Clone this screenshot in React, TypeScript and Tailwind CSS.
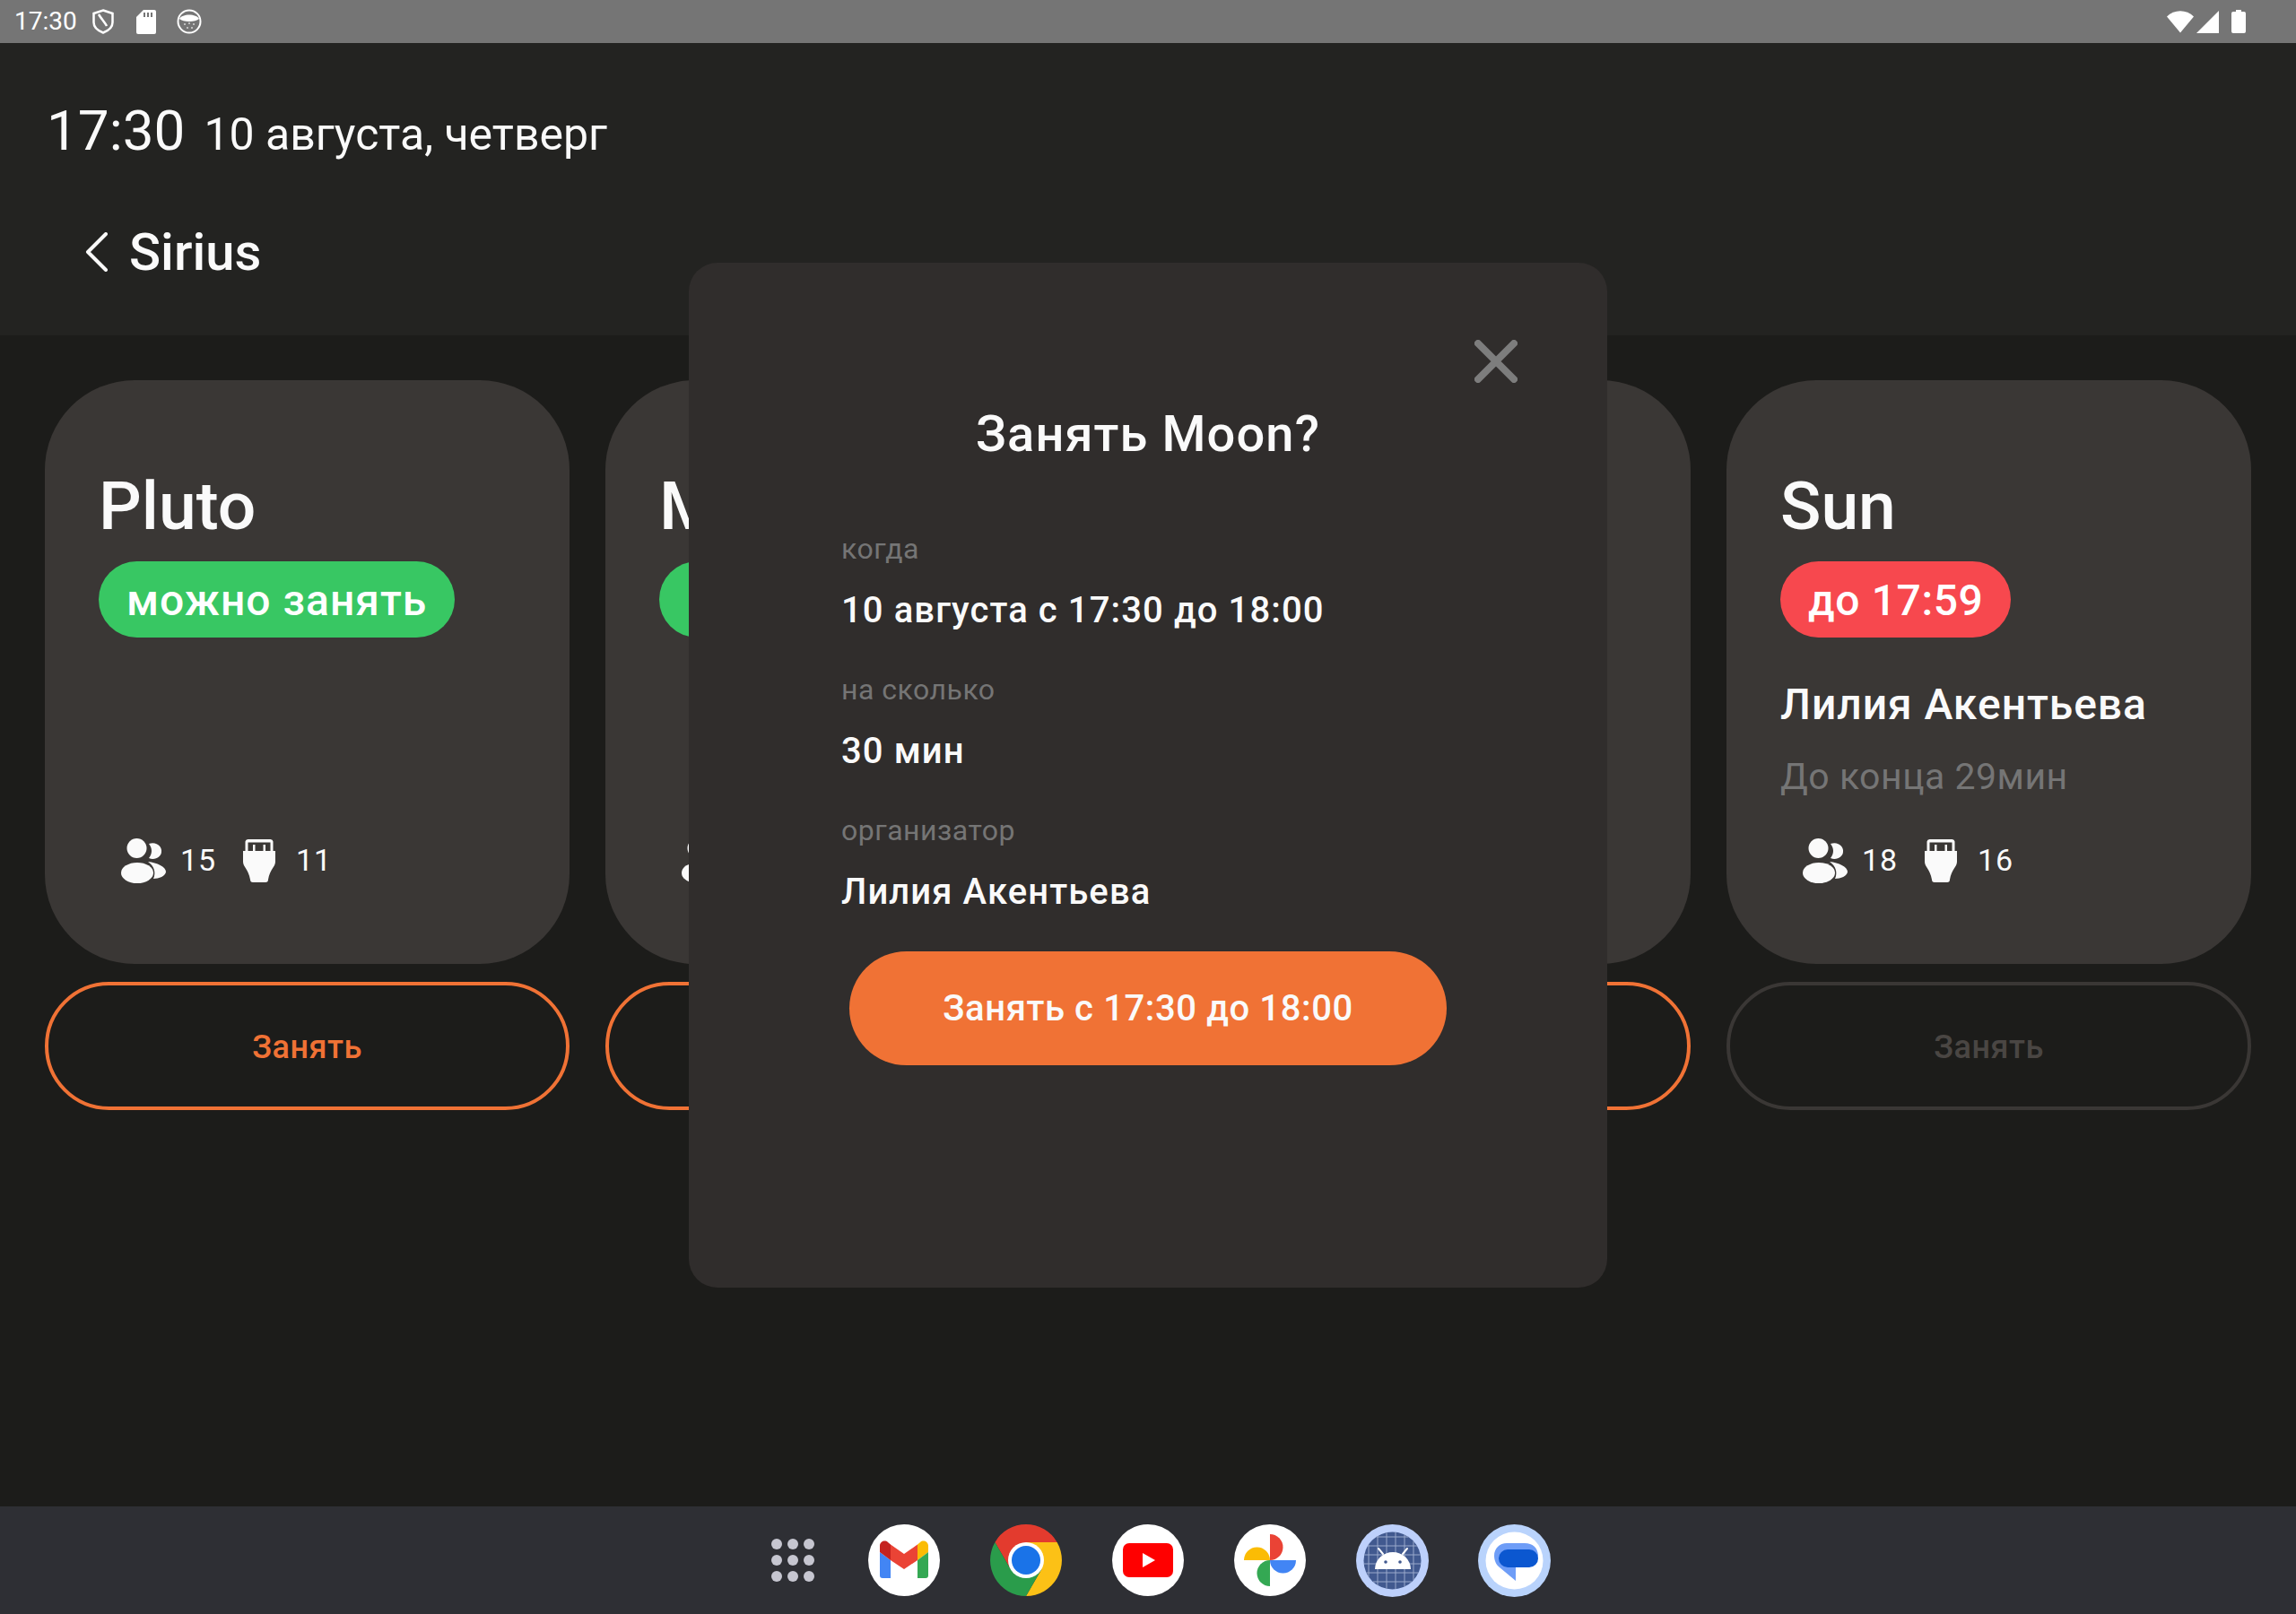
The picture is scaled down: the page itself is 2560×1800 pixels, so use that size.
const rooms = [
  { name: 'Pluto', people: 15, ports: 11, free: true },
  { name: 'Moon', people: 12, ports: 8, free: true },
  { name: 'Mars', people: 10, ports: 6, free: true },
  { name: 'Sun', people: 18, ports: 16, free: false },
]

function PeopleIcon() {
  return (
    <svg width="50" height="50" viewBox="0 0 50 50" className="shrink-0">
      <circle cx="17.500" cy="11" r="11" fill="#fafafa" />
      <ellipse cx="18" cy="38.500" rx="18" ry="11.500" fill="#fafafa" />
      <path d="M31 6C40 3 46 10 45 15C45 20 38 25 31 22C35 17 35 11 31 6z" fill="#fafafa" />
      <path d="M30 26C40 27 50 32 50 37C50 42 42 45 36 45C39 38 37 31 30 26z" fill="#fafafa" />
    </svg>
  )
}

function PortIcon() {
  return (
    <svg width="36" height="50" viewBox="0 0 36 50" className="shrink-0">
      <path d="M2.500 14V3.500A3 3 0 0 1 5.500 1h25a3 3 0 0 1 3 2.500V14h-3V4.500H5.500V14z" fill="#fafafa" />
      <path d="M11 7h2.500v7H11zM22.500 7H25v7h-2.500z" fill="#fafafa" />
      <path d="M0 14H36V26C36 32 30 34 28 46Q28 49 25 49H11Q8 49 8 46C6 34 0 32 0 26z" fill="#fafafa" />
    </svg>
  )
}

function RoomCard({ room }: { room: (typeof rooms)[number] }) {
  return (
    <div className="flex flex-col gap-[20px]">
      <div className="flex h-[651px] flex-col rounded-[100px] bg-[#3a3735] pl-[60px] pt-[98px]">
        <div className="text-[75px] font-medium leading-[84px] text-[#fafafa]">{room.name}</div>
        {room.free ? (
          <div className="mt-[20px] flex h-[85px] w-fit items-center rounded-full bg-[#38c763] px-[31px] pt-[2px] text-[48px] font-medium tracking-[1px] text-white">
            можно занять
          </div>
        ) : (
          <>
            <div className="mt-[20px] flex h-[85px] w-fit items-center rounded-full bg-[#f7484e] px-[31px] pt-[2px] text-[48px] font-medium tracking-[0.6px] text-white">
              до 17:59
            </div>
            <div className="mt-[47px] text-[48px] font-medium leading-[56px] tracking-[0.95px] text-[#fafafa]">Лилия Акентьева</div>
            <div className="mt-[27px] text-[41px] leading-[50px] tracking-[0.5px] text-[#757575]">До конца 29мин</div>
          </>
        )}
        <div className="mb-[90px] ml-[25px] mt-auto flex items-center text-[34px] tracking-[1px] text-[#fafafa]">
          <PeopleIcon />
          <span className="ml-[16px] w-[70px]">{room.people}</span>
          <PortIcon />
          <span className="ml-[23px]">{room.ports}</span>
        </div>
      </div>
      <button
        type="button"
        className={
          room.free
            ? 'h-[143px] rounded-full border-[4px] border-[#f07235] pt-[2px] text-[36px] font-medium tracking-[0.5px] text-[#f07235]'
            : 'h-[143px] rounded-full border-[4px] border-[#3a3735] pt-[2px] text-[36px] font-medium tracking-[0.5px] text-[#4a4643]'
        }
      >
        Занять
      </button>
    </div>
  )
}

function Field({ label, value }: { label: string; value: string }) {
  return (
    <div>
      <div className="text-[32px] leading-[40px] tracking-[0.5px] text-[#757575]">{label}</div>
      <div className="mt-[24px] text-[40px] font-medium leading-[50px] tracking-[1.1px] text-[#fafafa]">{value}</div>
    </div>
  )
}

function Gmail() {
  return (
    <svg width="80" height="80" viewBox="0 0 80 80">
      <circle cx="40" cy="40" r="40" fill="#fff" />
      <path d="M13 31l12 9v20h-9q-3 0-3-3z" fill="#4285f4" />
      <path d="M13 31v-7c0-5 6-7 9-4l3 2.500V40z" fill="#c5221f" />
      <path d="M25 22.500L40 33l15-10.500V40L40 50L25 40z" fill="#ea4335" />
      <path d="M55 22.500l3-2.500c3-3 9-1 9 4v7L55 40z" fill="#fbbc04" />
      <path d="M55 40l12-9v26q0 3-3 3h-9z" fill="#34a853" />
    </svg>
  )
}

function Chrome() {
  return (
    <svg width="80" height="80" viewBox="0 0 80 80">
      <path d="M40 0A40 40 0 0 0 5.400 20L22.700 50L40 20H74.600A40 40 0 0 0 40 0z" fill="#e33b2e" />
      <path d="M74.600 20H40L57.300 50L40 80A40 40 0 0 0 74.600 20z" fill="#fcc116" />
      <path d="M5.400 20A40 40 0 0 0 40 80L57.300 50H22.700z" fill="#2a9c4b" />
      <circle cx="40" cy="40" r="20" fill="#fff" />
      <circle cx="40" cy="40" r="16" fill="#1a73e8" />
    </svg>
  )
}

function Youtube() {
  return (
    <svg width="80" height="80" viewBox="0 0 80 80">
      <circle cx="40" cy="40" r="40" fill="#fff" />
      <rect x="12" y="21" width="56" height="38" rx="7" fill="#ff0000" />
      <path d="M34 32l14 8l-14 8z" fill="#fff" />
    </svg>
  )
}

function Photos() {
  return (
    <svg width="80" height="80" viewBox="0 0 80 80">
      <circle cx="40" cy="40" r="40" fill="#fff" />
      <path d="M40 11a14.500 14.500 0 0 1 0 29z" fill="#ea4335" />
      <path d="M11 40a14.500 14.500 0 0 1 29 0z" fill="#fbbc04" />
      <path d="M40 40h29a14.500 14.500 0 0 1-29 0z" fill="#4285f4" />
      <path d="M40 40v29a14.500 14.500 0 0 1 0-29z" fill="#34a853" />
    </svg>
  )
}

function AndroidStudio() {
  const lines = [14, 24, 34, 44, 54, 64, 74]
  return (
    <svg width="81" height="81" viewBox="0 0 81 81">
      <circle cx="40.500" cy="40.500" r="40.500" fill="#bdd0fb" />
      <circle cx="40.500" cy="40.500" r="32" fill="#41598f" />
      <g stroke="#9aa9cb" strokeWidth="1">
        {lines.map((p) => {
          const h = Math.sqrt(Math.max(0, 32 * 32 - (p - 40.5) * (p - 40.5)))
          return (
            <g key={p}>
              <line x1={p} x2={p} y1={40.5 - h} y2={40.5 + h} />
              <line y1={p} y2={p} x1={40.5 - h} x2={40.5 + h} />
            </g>
          )
        })}
      </g>
      <path d="M21 50a20 19 0 0 1 40 0z" fill="#fff" />
      <path d="M30 33l-5-6M52 33l5-6" stroke="#fff" strokeWidth="2" strokeLinecap="round" />
      <circle cx="33" cy="42" r="1.800" fill="#41598f" />
      <circle cx="49" cy="42" r="1.800" fill="#41598f" />
    </svg>
  )
}

function Messages() {
  return (
    <svg width="81" height="81" viewBox="0 0 81 81">
      <circle cx="40.500" cy="40.500" r="40.500" fill="#b9d3fc" />
      <circle cx="40.500" cy="40.500" r="32" fill="#fff" />
      <path d="M32 21h20c9 0 14 5 15 13c0 9-6 13-13 14H42v15L24 48c-4-3-6-8-6-13c0-8 6-14 14-14z" fill="#6e9df7" />
      <rect x="23" y="28" width="44" height="20" rx="10" fill="#0b57d0" />
    </svg>
  )
}

export default function App() {
  return (
    <div className="relative flex h-[1800px] w-[2560px] flex-col overflow-hidden bg-[#1c1c1a] font-['Roboto',sans-serif]">
      <div className="flex h-[48px] shrink-0 items-center bg-[#757575] pl-[16px] pr-[56px] text-white">
        <span className="text-[28px]">17:30</span>
        <svg width="24" height="28" viewBox="0 0 24 28" className="ml-[17px]">
          <path d="M12 1.500L22.500 5v10c0 5-4 9-10.500 11.500C5.500 24 1.500 20 1.500 15V5z" fill="none" stroke="#fff" strokeWidth="2.500" />
          <path d="M7 6c3 5 7 9 9 13" fill="none" stroke="#fff" strokeWidth="2.500" />
        </svg>
        <svg width="22" height="28" viewBox="0 0 22 28" className="ml-[25px]">
          <path d="M8 1h12a2 2 0 0 1 2 2v23a2 2 0 0 1-2 2H2a2 2 0 0 1-2-2V9z" fill="#fff" />
          <path d="M8 4h2v5H8zM12 4h2v5h-2zM16 4h2v5h-2z" fill="#757575" />
        </svg>
        <svg width="28" height="28" viewBox="0 0 28 28" className="ml-[23px]">
          <circle cx="14" cy="14" r="12.500" fill="none" stroke="#fff" strokeWidth="2" />
          <path d="M3 11c3-6 19-6 22 0c-4 4-18 4-22 0z" fill="#fff" />
          <g fill="#fff" opacity="0.7">
            <circle cx="9" cy="17" r="1" />
            <circle cx="14" cy="16" r="1" />
            <circle cx="19" cy="17" r="1" />
            <circle cx="12" cy="21" r="1" />
            <circle cx="17" cy="21" r="1" />
          </g>
        </svg>
        <div className="ml-auto flex items-center">
          <svg width="30" height="26" viewBox="0 0 30 26">
            <path d="M0 7.500C8-1 22-1 30 7.500L15 25.500z" fill="#fff" />
          </svg>
          <svg width="25" height="25" viewBox="0 0 25 25" className="ml-[3px]">
            <path d="M25 0v25H0z" fill="#fff" />
          </svg>
          <svg width="16" height="26" viewBox="0 0 16 26" className="ml-[14px]">
            <path d="M5 0h6v2h3a2 2 0 0 1 2 2v20a2 2 0 0 1-2 2H2a2 2 0 0 1-2-2V4a2 2 0 0 1 2-2h3z" fill="#fff" />
          </svg>
        </div>
      </div>

      <header className="h-[326px] shrink-0 bg-[#232321] pl-[52px] pt-[63px] text-[#fafafa]">
        <div className="flex items-baseline">
          <span className="text-[62px] leading-[70px]">17:30</span>
          <span className="ml-[21px] text-[50px] leading-[70px]">10 августа, четверг</span>
        </div>
        <div className="mt-[63px] flex items-center pl-[43px]">
          <svg width="26" height="44" viewBox="0 0 26 44">
            <path d="M23 2L3 22l20 20" fill="none" stroke="#fafafa" strokeWidth="4" strokeLinecap="round" strokeLinejoin="round" />
          </svg>
          <span className="ml-[23px] text-[58px] font-medium leading-[66px]">Sirius</span>
        </div>
      </header>

      <main className="grid min-h-0 flex-1 grid-cols-4 content-start gap-x-[40px] px-[50px] pt-[50px]">
        {rooms.map((room) => (
          <RoomCard key={room.name} room={room} />
        ))}
      </main>

      <nav className="flex h-[120px] shrink-0 items-center justify-center bg-[#2e2f34]">
        <div className="grid w-[136px] place-items-center pl-[24px]">
          <div className="grid grid-cols-3 gap-[6px]">
            {Array.from({ length: 9 }).map((_, i) => (
              <div key={i} className="h-[12px] w-[12px] rounded-full bg-[#c6c6d0]" />
            ))}
          </div>
        </div>
        <div className="grid w-[136px] place-items-center"><Gmail /></div>
        <div className="grid w-[136px] place-items-center"><Chrome /></div>
        <div className="grid w-[136px] place-items-center"><Youtube /></div>
        <div className="grid w-[136px] place-items-center"><Photos /></div>
        <div className="grid w-[136px] place-items-center"><AndroidStudio /></div>
        <div className="grid w-[136px] place-items-center"><Messages /></div>
      </nav>

      <div className="absolute left-[768px] top-[293px] flex h-[1143px] w-[1024px] flex-col rounded-[32px] bg-[#302d2c] px-[170px] pt-[158px]">
        <svg width="48" height="48" viewBox="0 0 48 48" className="absolute right-[100px] top-[86px]">
          <path d="M4 4l40 40M44 4L4 44" stroke="#7d7d7d" strokeWidth="8" strokeLinecap="round" />
        </svg>
        <h2 className="text-center text-[56px] font-medium leading-[66px] tracking-[1.1px] text-[#fafafa]">Занять Moon?</h2>
        <div className="mt-[75px] flex flex-col gap-[43px]">
          <Field label="когда" value="10 августа с 17:30 до 18:00" />
          <Field label="на сколько" value="30 мин" />
          <Field label="организатор" value="Лилия Акентьева" />
        </div>
        <button
          type="button"
          className="ml-[9px] mt-[41px] h-[127px] w-[666px] shrink-0 rounded-full bg-[#f07235] text-[40px] font-medium tracking-[0.6px] text-[#fafafa]"
        >
          Занять с 17:30 до 18:00
        </button>
      </div>
    </div>
  )
}
